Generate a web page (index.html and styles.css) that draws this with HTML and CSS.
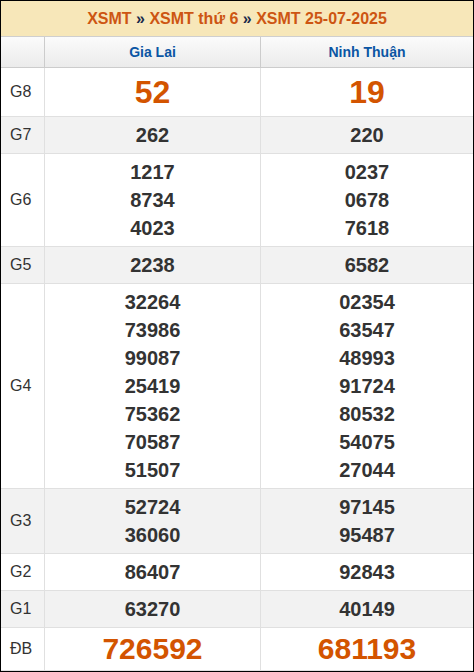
FILE: index.html
```html
<!DOCTYPE html>
<html lang="vi">
<head>
<meta charset="utf-8">
<title>XSMT 25-07-2025</title>
<link rel="stylesheet" href="styles.css">
</head>
<body>
<div class="board">
  <div class="title"><span class="crumb">XSMT</span> <span class="sep">»</span> <span class="crumb">XSMT thứ 6</span> <span class="sep">»</span> <span class="crumb">XSMT 25-07-2025</span></div>
  <div class="grid">
    <div class="cell head label"></div>
    <div class="cell head prov">Gia Lai</div>
    <div class="cell head prov last">Ninh Thuận</div>

    <div class="cell label">G8</div>
    <div class="cell num big">52</div>
    <div class="cell num big last">19</div>

    <div class="cell label alt">G7</div>
    <div class="cell num alt">262</div>
    <div class="cell num alt last">220</div>

    <div class="cell label">G6</div>
    <div class="cell num"><div>1217</div><div>8734</div><div>4023</div></div>
    <div class="cell num last"><div>0237</div><div>0678</div><div>7618</div></div>

    <div class="cell label alt">G5</div>
    <div class="cell num alt">2238</div>
    <div class="cell num alt last">6582</div>

    <div class="cell label">G4</div>
    <div class="cell num"><div>32264</div><div>73986</div><div>99087</div><div>25419</div><div>75362</div><div>70587</div><div>51507</div></div>
    <div class="cell num last"><div>02354</div><div>63547</div><div>48993</div><div>91724</div><div>80532</div><div>54075</div><div>27044</div></div>

    <div class="cell label alt">G3</div>
    <div class="cell num alt"><div>52724</div><div>36060</div></div>
    <div class="cell num alt last"><div>97145</div><div>95487</div></div>

    <div class="cell label">G2</div>
    <div class="cell num">86407</div>
    <div class="cell num last">92843</div>

    <div class="cell label alt">G1</div>
    <div class="cell num alt">63270</div>
    <div class="cell num alt last">40149</div>

    <div class="cell label">ĐB</div>
    <div class="cell num special">726592</div>
    <div class="cell num special last">681193</div>
  </div>
</div>
</body>
</html>
```
FILE: styles.css
```css
* { box-sizing: border-box; }
html, body { margin: 0; padding: 0; background: #fff; }
body { font-family: "Liberation Sans", Arial, sans-serif; color: #333; }

.board {
  width: 474px;
  height: 672px;
  border: 1px solid #000;
  overflow: hidden;
}

.title {
  height: 36px;
  line-height: 35px;
  background: #f7e7b9;
  border-bottom: 1px solid #cfcfcf;
  text-align: center;
  font-size: 16px;
  font-weight: bold;
  color: #cd5512;
}
.title .sep { color: #1a2a4a; }

.grid {
  display: grid;
  grid-template-columns: 44px 216px 1fr;
}

.cell {
  border-right: 1px solid #e0e0e0;
  border-bottom: 1px solid #e0e0e0;
  padding: 4px 0;
}
.cell.last { border-right: none; }

.cell.head {
  height: 31px;
  padding: 0;
  line-height: 30px;
  background: linear-gradient(#fbfbfb, #ebebeb);
  border-right-color: #cccccc;
  border-bottom-color: #cccccc;
}
.cell.head.last { border-right: none; }
.prov {
  text-align: center;
  font-size: 14px;
  font-weight: bold;
  color: #0b56a4;
}

.label {
  display: flex;
  align-items: center;
  padding-left: 9px;
  font-size: 16px;
  color: #333;
}

.num {
  text-align: center;
  font-size: 20px;
  font-weight: bold;
  line-height: 28px;
  color: #333;
}
.num.big {
  font-size: 32px;
  line-height: 40px;
  color: #d35400;
}
.num.special {
  font-size: 30px;
  line-height: 34px;
  color: #d35400;
}

.alt { background: #f2f2f2; }
```
